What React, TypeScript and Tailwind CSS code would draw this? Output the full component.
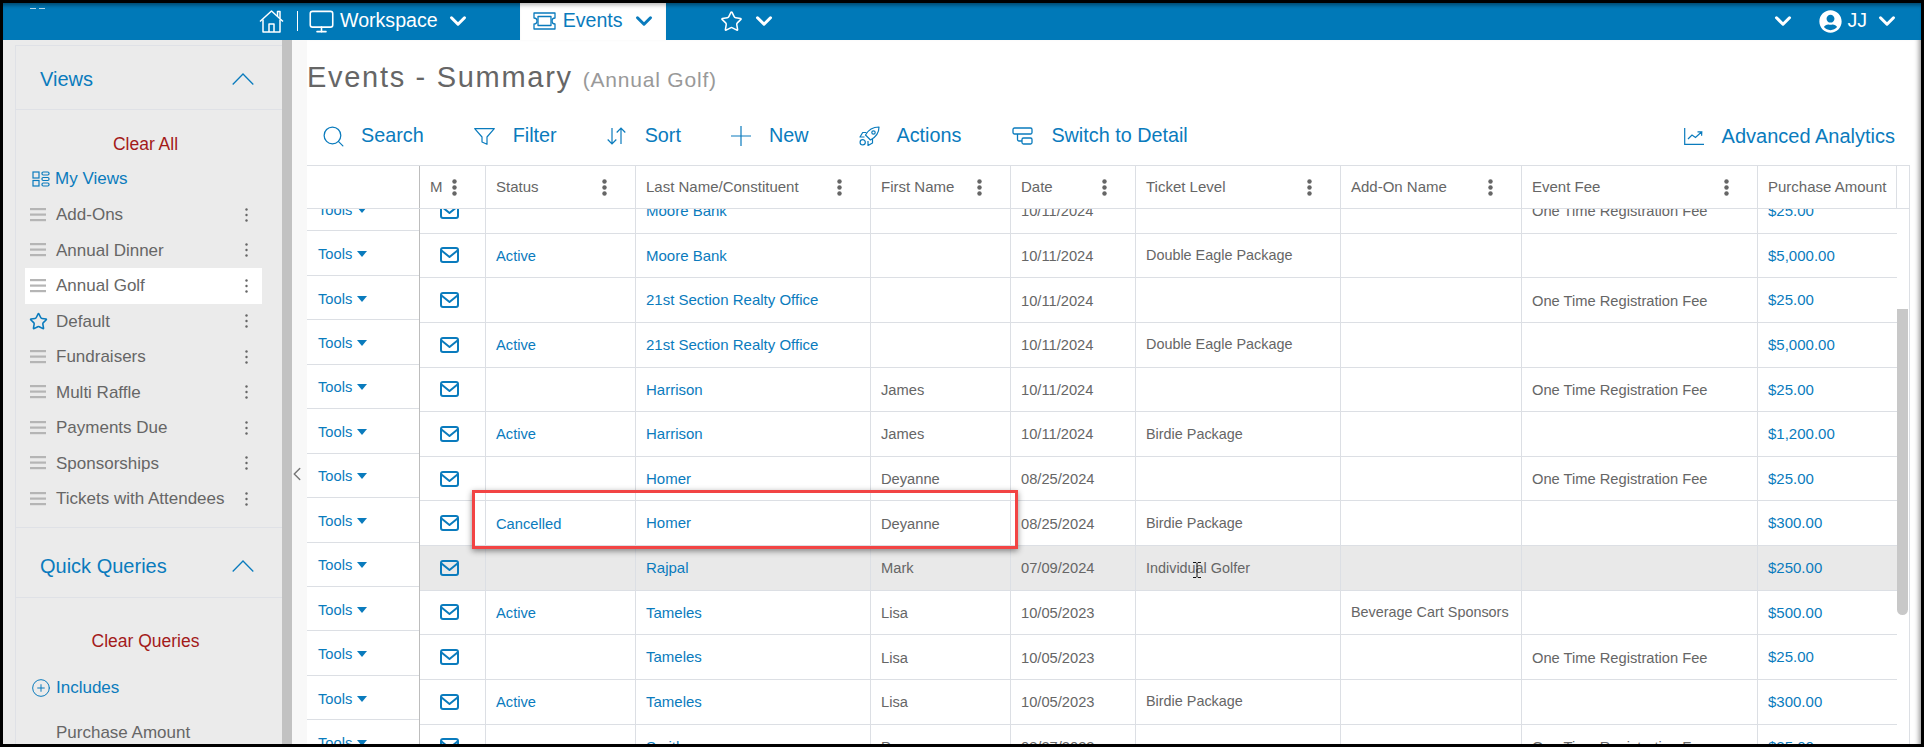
import { ChevronDown, ChevronLeft, CirclePlus, Monitor, Search, Star } from "lucide-react";
import { FaUserCircle } from "react-icons/fa";

const views = ["Add-Ons", "Annual Dinner", "Annual Golf", "Default", "Fundraisers", "Multi Raffle", "Payments Due", "Sponsorships", "Tickets with Attendees"];

const columns = [
  { name: "M", kebab: true },
  { name: "Status", kebab: true },
  { name: "Last Name/Constituent", kebab: true },
  { name: "First Name", kebab: true },
  { name: "Date", kebab: true },
  { name: "Ticket Level", kebab: true },
  { name: "Add-On Name", kebab: true },
  { name: "Event Fee", kebab: true },
  { name: "Purchase Amount", kebab: false },
];

const FEE = "One Time Registration Fee";

const rows = [
  { status: "", last: "Moore Bank", first: "", date: "10/11/2024", ticket: "", addOn: "", fee: FEE, amount: "$25.00" },
  { status: "Active", last: "Moore Bank", first: "", date: "10/11/2024", ticket: "Double Eagle Package", addOn: "", fee: "", amount: "$5,000.00" },
  { status: "", last: "21st Section Realty Office", first: "", date: "10/11/2024", ticket: "", addOn: "", fee: FEE, amount: "$25.00" },
  { status: "Active", last: "21st Section Realty Office", first: "", date: "10/11/2024", ticket: "Double Eagle Package", addOn: "", fee: "", amount: "$5,000.00" },
  { status: "", last: "Harrison", first: "James", date: "10/11/2024", ticket: "", addOn: "", fee: FEE, amount: "$25.00" },
  { status: "Active", last: "Harrison", first: "James", date: "10/11/2024", ticket: "Birdie Package", addOn: "", fee: "", amount: "$1,200.00" },
  { status: "", last: "Homer", first: "Deyanne", date: "08/25/2024", ticket: "", addOn: "", fee: FEE, amount: "$25.00" },
  { status: "Cancelled", last: "Homer", first: "Deyanne", date: "08/25/2024", ticket: "Birdie Package", addOn: "", fee: "", amount: "$300.00" },
  { status: "", last: "Rajpal", first: "Mark", date: "07/09/2024", ticket: "Individual Golfer", addOn: "", fee: "", amount: "$250.00" },
  { status: "Active", last: "Tameles", first: "Lisa", date: "10/05/2023", ticket: "", addOn: "Beverage Cart Sponsors", fee: "", amount: "$500.00" },
  { status: "", last: "Tameles", first: "Lisa", date: "10/05/2023", ticket: "", addOn: "", fee: FEE, amount: "$25.00" },
  { status: "Active", last: "Tameles", first: "Lisa", date: "10/05/2023", ticket: "Birdie Package", addOn: "", fee: "", amount: "$300.00" },
  { status: "", last: "Smith", first: "Penny", date: "08/27/2023", ticket: "", addOn: "", fee: FEE, amount: "$25.00" },
];

const gridCols = "grid grid-cols-[66px_150px_235px_140px_125px_205px_181px_236px_139px]";

const HomeIcon = () => (
  <svg width="25" height="24" viewBox="0 0 25 24" fill="none" stroke="currentColor" strokeWidth="1.5" strokeLinejoin="round">
    <path d="M1 12.5 12.5 2 24 12.5" />
    <path d="M18.5 7V2.5h2.500v7" />
    <path d="M4 10.5V23h17V10.5" />
    <path d="M10 23v-8h5v8" />
  </svg>
);

const TicketIcon = () => (
  <svg width="23" height="20" viewBox="0 0 23 20" fill="none" stroke="#0a7bbd" strokeWidth="1.3" strokeLinejoin="round">
    <path d="M1 2h21v5a3 3 0 0 0 0 6v5H1v-5a3 3 0 0 0 0-6z" />
    <rect x="5" y="5.5" width="13" height="9" />
  </svg>
);

const FilterIcon = () => (
  <svg width="21" height="17" viewBox="0 0 21 17" fill="none" stroke="#0a7bbd" strokeWidth="1.2" strokeLinejoin="round">
    <path d="M.7.7h19.600l-7.300 8.300v7.300l-5-2.300V9z" />
  </svg>
);

const SortIcon = () => (
  <svg width="19" height="18" viewBox="0 0 19 18" fill="none" stroke="#0a7bbd" strokeWidth="1.2">
    <path d="M5 1v16M.7 12.500 5 17l4.300-4.500" />
    <path d="M14 17V1M9.700 5.500 14 1l4.300 4.500" />
  </svg>
);

const PlusIcon = () => (
  <svg width="20" height="20" viewBox="0 0 20 20" fill="none" stroke="#0a7bbd" strokeWidth="1.2">
    <path d="M0 10h20M10 0v20" />
  </svg>
);

const RocketIcon = () => (
  <svg width="21" height="20" viewBox="0 0 21 20" fill="none" stroke="#0a7bbd" strokeWidth="1.2" strokeLinejoin="round">
    <path d="M20 1C14.500 1 9.500 3.500 6.500 9l5 5c5.500-3 8.500-7.500 8.500-13z" />
    <circle cx="14.500" cy="6.500" r="1.700" />
    <path d="M7.500 6.500H3.700L1 11h4.500" />
    <path d="M13.500 13v4l-4.500 2.500V15" />
    <circle cx="3.700" cy="16.300" r="2.600" />
  </svg>
);

const SwitchIcon = () => (
  <svg width="21" height="18" viewBox="0 0 21 18" fill="none" stroke="#0a7bbd" strokeWidth="1.300">
    <rect x="1" y="1" width="19" height="6" rx="1.500" />
    <rect x="10" y="11" width="10" height="6" rx="1.500" />
    <path d="M5.500 7v5.500a1.500 1.500 0 0 0 1.500 1.500h3" />
  </svg>
);

const AnalyticsIcon = () => (
  <svg width="20" height="17" viewBox="0 0 20 17" fill="none" stroke="#0a7bbd" strokeWidth="1.2">
    <path d="M.7 0v16.300H20" />
    <path d="M4 11l4-4 3.500 2.500L17.500 4M13.500 3.800l4.300.1-.2 3.900" />
  </svg>
);

const MyViewsIcon = () => (
  <svg width="18" height="16" viewBox="0 0 18 16" fill="none" stroke="#0a7bbd" strokeWidth="1.2">
    <rect x="1" y="1" width="6" height="6" />
    <rect x="1" y="9.500" width="6" height="5.500" />
    <rect x="10" y="1" width="7" height="3" rx="1.200" />
    <rect x="10" y="6.500" width="7" height="3" rx="1.200" />
    <rect x="10" y="12" width="7" height="3" rx="1.200" />
  </svg>
);

const MailIcon = () => (
  <svg width="19" height="16" viewBox="0 0 19 16" fill="none" stroke="#0a7bbd" strokeWidth="2" strokeLinejoin="round">
    <rect x="1" y="1" width="17" height="14" rx="2" />
    <path d="M1.500 3.500 9.500 10l8-6.500" />
  </svg>
);

const MenuBars = () => (
  <svg width="16" height="14" viewBox="0 0 16 14" fill="#b5b5b5">
    <rect y="0" width="16" height="2.200" />
    <rect y="5.500" width="16" height="2.200" />
    <rect y="11" width="16" height="2.200" />
  </svg>
);

const SmallKebab = () => (
  <svg width="3" height="14" viewBox="0 0 3 14" fill="#666">
    <circle cx="1.500" cy="1.500" r="1.200" />
    <circle cx="1.500" cy="7" r="1.200" />
    <circle cx="1.500" cy="12.500" r="1.200" />
  </svg>
);

const HeaderKebab = () => (
  <svg width="5" height="17" viewBox="0 0 5 17" fill="#666">
    <circle cx="2.500" cy="2.500" r="2.200" />
    <circle cx="2.500" cy="8.500" r="2.200" />
    <circle cx="2.500" cy="14.500" r="2.200" />
  </svg>
);

const Caret = () => (
  <svg width="10" height="6" viewBox="0 0 10 6" fill="#0a7bbd">
    <path d="M0 0h10L5 6z" />
  </svg>
);

const SectionHeader = ({ title, className }: { title: string; className: string }) => (
  <div className={`flex items-center justify-between border-b border-[#dfe1e6] pl-[24px] pr-[28px] pt-[2px] text-[20px] text-[#0a7bbd] ${className}`}>
    <span>{title}</span>
    <svg width="22" height="12" viewBox="0 0 22 12" fill="none" stroke="#0a7bbd" strokeWidth="1.300">
      <path d="M.7 11.500 11 1l10.300 10.500" />
    </svg>
  </div>
);

const ToolbarItem = ({ icon, label, className }: { icon: React.ReactNode; label: string; className: string }) => (
  <div className={`flex items-center ${className}`}>
    {icon}
    <span>{label}</span>
  </div>
);

export default function App() {
  return (
    <div className="h-[748px] w-[1924px] overflow-hidden border-b border-white bg-black pb-[3px] pl-[3px] pr-[3px] pt-[3px] font-['Liberation_Sans',sans-serif]">
      <div className="relative flex h-full flex-col bg-white">
        <header className="flex h-[37px] shrink-0 items-center bg-[#0079b8] pb-px text-[19.600px] text-white shadow-[inset_0_5px_4px_-3px_rgba(0,0,0,0.45)]">
          <div className="ml-[27px] flex w-[18px] gap-[3px] self-start pt-[5px]">
            <span className="h-px w-[6px] bg-white/70" />
            <span className="h-px w-[6px] bg-white/70" />
          </div>
          <div className="ml-[211px]"><HomeIcon /></div>
          <span className="ml-[13px] h-[20px] w-px bg-white" />
          <Monitor size={27} strokeWidth={1.4} className="ml-[10px]" />
          <span className="ml-[5px]">Workspace</span>
          <ChevronDown size={26} strokeWidth={2.8} className="ml-[7px]" />
          <div className="-mb-px ml-[49px] flex h-[37px] w-[146px] items-center bg-white pb-px pl-[13px] text-[#0a7bbd] shadow-[inset_0_5px_4px_-3px_rgba(0,0,0,0.3)]">
            <TicketIcon />
            <span className="ml-[7px]">Events</span>
            <ChevronDown size={26} strokeWidth={2.8} className="ml-[8px]" />
          </div>
          <Star size={23} strokeWidth={1.6} className="ml-[54px]" />
          <ChevronDown size={26} strokeWidth={2.8} className="ml-[8px]" />
          <ChevronDown size={26} strokeWidth={2.8} className="ml-auto" />
          <FaUserCircle size={23} className="ml-[23px]" />
          <span className="ml-[5px]">JJ</span>
          <ChevronDown size={26} strokeWidth={2.8} className="ml-[7px] mr-[21px]" />
        </header>

        <div className="flex min-h-0 flex-1">
          <aside className="w-[279px] shrink-0 overflow-hidden bg-[#ebebeb] pl-[12px] pt-[5px] text-[17px] text-[#666]">
            <div className="h-full border-l border-[#dfe1e6]">
              <div className="border-b border-[#dfe1e6] pb-[10px]">
                <SectionHeader title="Views" className="h-[65px] border-t" />
                <div className="mt-[17px] flex h-[34px] items-center justify-center pr-[7px] text-[17.500px] text-[#a31a1a]">Clear All</div>
                <div className="flex h-[36px] items-center pl-[16px] text-[#0a7bbd]">
                  <MyViewsIcon />
                  <span className="ml-[5px]">My Views</span>
                </div>
                {views.map((view) => (
                  <div key={view} className={`ml-[9px] flex h-[35.500px] w-[237px] items-center pl-[5px] ${view === "Annual Golf" ? "bg-white" : ""}`}>
                    <div className="flex w-[16px] justify-center">
                      {view === "Default" ? <Star size={19} strokeWidth={2} color="#0a7bbd" className="shrink-0" /> : <MenuBars />}
                    </div>
                    <span className="ml-[10px]">{view}</span>
                    <div className="ml-auto mr-[14px]"><SmallKebab /></div>
                  </div>
                ))}
              </div>
              <SectionHeader title="Quick Queries" className="mt-[6px] h-[64px]" />
              <div className="mt-[27px] flex h-[34px] items-center justify-center pr-[7px] text-[17.500px] text-[#a31a1a]">Clear Queries</div>
              <div className="mt-[12px] flex h-[34px] items-center pl-[15px] text-[#0a7bbd]">
                <CirclePlus size={20} strokeWidth={1.2} />
                <span className="ml-[5px]">Includes</span>
              </div>
              <div className="mt-[15px] pl-[40px]">Purchase Amount</div>
            </div>
          </aside>

          <div className="w-[10px] shrink-0 bg-[#c2c2c2]" />
          <div className="w-[15px] shrink-0 bg-[#f8f8f8] pt-[423px]">
            <ChevronLeft size={22} strokeWidth={1.6} color="#777" className="-ml-[6px]" />
          </div>

          <main className="flex min-w-0 flex-1 flex-col pr-[11px] shadow-[inset_-6px_0_5px_-4px_rgba(0,0,0,0.4)]">
            <div className="mt-[16px] flex h-[36px] items-baseline">
              <h1 className="text-[29px] tracking-[1.700px] text-[#666]">Events - Summary</h1>
              <span className="ml-[10px] text-[21px] tracking-[0.800px] text-[#999]">(Annual Golf)</span>
            </div>

            <div className="mt-[26px] flex h-[36px] items-center pl-[14px] pr-[15px] text-[19.800px] text-[#0a7bbd]">
              <ToolbarItem icon={<Search size={25} strokeWidth={1.2} className="mr-[15px]" />} label="Search" className="" />
              <ToolbarItem icon={<div className="mr-[18px]"><FilterIcon /></div>} label="Filter" className="ml-[50px]" />
              <ToolbarItem icon={<div className="mr-[19px]"><SortIcon /></div>} label="Sort" className="ml-[50px]" />
              <ToolbarItem icon={<div className="mr-[18px]"><PlusIcon /></div>} label="New" className="ml-[50px]" />
              <ToolbarItem icon={<div className="mr-[17px]"><RocketIcon /></div>} label="Actions" className="ml-[50px]" />
              <ToolbarItem icon={<div className="mr-[18px]"><SwitchIcon /></div>} label="Switch to Detail" className="ml-[51px]" />
              <ToolbarItem icon={<div className="mr-[18px]"><AnalyticsIcon /></div>} label="Advanced Analytics" className="ml-auto text-[20px]" />
            </div>

            <div className="mt-[11px] flex min-h-0 flex-1 flex-col text-[14.700px]">
              <div className="flex h-[44px] shrink-0 border-y border-[#dcdfe4] text-[15px] text-[#666]">
                <div className="w-[113px] shrink-0 border-r border-[#bdbdbd]" />
                <div className={gridCols}>
                  {columns.map((col) => (
                    <div key={col.name} className="flex items-center justify-between border-r border-[#dcdfe4] pl-[10px] pr-[28px]">
                      <span className="whitespace-nowrap">{col.name}</span>
                      {col.kebab && <HeaderKebab />}
                    </div>
                  ))}
                </div>
                <div className="flex-1 border-r border-[#dcdfe4]" />
              </div>

              <div className="flex min-h-0 flex-1 overflow-hidden">
                <div className="-mt-[22px] w-[113px] shrink-0 border-r border-[#bdbdbd]">
                  {rows.map((row, i) => (
                    <div key={i} className="flex h-[44.450px] items-center gap-[5px] border-b border-[#dcdfe4] pl-[11px] pt-[2px] text-[#0a7bbd]">
                      Tools <Caret />
                    </div>
                  ))}
                </div>
                <div className="-mt-[20px]">
                  {rows.map((row, i) => (
                    <div key={i} className={`${gridCols} h-[44.640px] border-b border-[#dcdfe4] ${i === 8 ? "bg-[#e9e9e9]" : ""}`}>
                      <div className="flex items-center justify-center border-r border-[#dcdfe4] pr-[6px]"><MailIcon /></div>
                      <div className="flex items-center border-r border-[#dcdfe4] pl-[10px] pt-px text-[#0a7bbd]">{row.status}</div>
                      <div className="flex items-center border-r border-[#dcdfe4] pl-[10px] pt-px text-[15px] text-[#0a7bbd]">{row.last}</div>
                      <div className="flex items-center border-r border-[#dcdfe4] pl-[10px] pt-px text-[#666]">{row.first}</div>
                      <div className="flex items-center border-r border-[#dcdfe4] pl-[10px] pt-px text-[#666]">{row.date}</div>
                      <div className="flex items-center border-r border-[#dcdfe4] pl-[10px] pt-px text-[14.400px] text-[#666]">{row.ticket}</div>
                      <div className="flex items-center border-r border-[#dcdfe4] pl-[10px] pt-px text-[14.400px] text-[#666]">{row.addOn}</div>
                      <div className="flex items-center border-r border-[#dcdfe4] pl-[10px] pt-px text-[#666]">{row.fee}</div>
                      <div className="flex items-center pl-[10px] pt-px text-[15px] text-[#0a7bbd]">{row.amount}</div>
                    </div>
                  ))}
                </div>
                <div className="flex-1 border-r border-[#dcdfe4]">
                  <div className="mt-[100px] h-[306px] w-[11px] rounded-b-[6px] bg-[#c8c8c8]" />
                </div>
              </div>
            </div>
          </main>
        </div>

        {/* red annotation box and text cursor sit on top of the grid */}
        <div className="absolute left-[469px] top-[487px] h-[59px] w-[546px] border-[3px] border-[#f24444] shadow-[0_2px_6px_rgba(0,0,0,0.45)]" />
        <svg className="absolute left-[1190px] top-[559px]" width="8" height="16" viewBox="0 0 8 16" fill="none" stroke="#111" strokeWidth="1">
          <path d="M0 .5h3l1 1 1-1h3M4 1.500v13M0 15.500h3l1-1 1 1h3" />
        </svg>
      </div>
    </div>
  );
}
